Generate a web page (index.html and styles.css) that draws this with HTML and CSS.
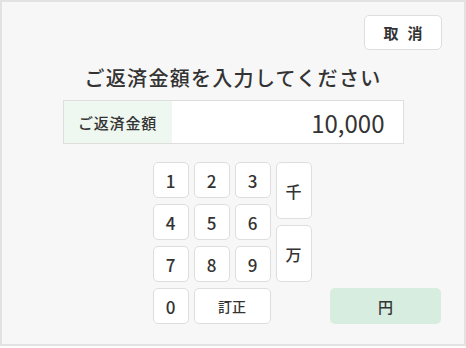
FILE: index.html
```html
<!DOCTYPE html>
<html lang="ja">
<head>
    <meta charset="UTF-8">
    <meta name="viewport" content="width=device-width, initial-scale=1.0">
    <title>ご返済金額入力</title>
    <link rel="stylesheet" href="styles.css">
</head>
<body>

    <div class="screen">
        <!-- Top bar -->
        <div class="top-bar">
            <button class="btn cancel-btn">取消</button>
        </div>

        <h1 class="title">ご返済金額を入力してください</h1>

        <!-- Amount display -->
        <div class="amount-field">
            <div class="amount-label">ご返済金額</div>
            <div class="amount-value">10,000</div>
        </div>

        <!-- Keypad + unit button -->
        <div class="bottom-area">
            <div class="keypad">
                <button class="btn key">1</button>
                <button class="btn key">2</button>
                <button class="btn key">3</button>
                <div class="unit-col">
                    <button class="btn key unit-key">千</button>
                    <button class="btn key unit-key">万</button>
                </div>
                <button class="btn key">4</button>
                <button class="btn key">5</button>
                <button class="btn key">6</button>
                <button class="btn key">7</button>
                <button class="btn key">8</button>
                <button class="btn key">9</button>
                <button class="btn key">0</button>
                <button class="btn key fix-key">訂正</button>
            </div>
            <button class="btn yen-btn">円</button>
        </div>
    </div>

</body>
</html>
```

FILE: styles.css
```css
body {
    margin: 0;
    font-family: "Noto Sans CJK JP", "Noto Sans", sans-serif;
    color: #333;
    background-color: #ffffff;
}

.screen {
    box-sizing: border-box;
    width: 466px;
    height: 346px;
    border: 2px solid #e2e2e2;
    background-color: #f7f7f7;
}

/* --- Buttons (common) --- */
.btn {
    font-family: inherit;
    color: #333;
    background-color: #ffffff;
    border: 1px solid #dedede;
    border-radius: 5px;
    padding: 0;
    box-sizing: border-box;
    cursor: pointer;
}

.top-bar {
    display: flex;
    justify-content: flex-end;
    padding: 13px 22px 0 0;
}
.cancel-btn {
    width: 78px;
    height: 35px;
    font-size: 15px;
    font-weight: 700;
    letter-spacing: 9px;
    padding-left: 9px;
}

.title {
    margin: 14px 0 0;
    text-align: center;
    font-size: 20px;
    line-height: 28px;
    font-weight: 500;
    letter-spacing: 1.3px;
}

/* --- Amount field --- */
.amount-field {
    display: flex;
    width: 341px;
    height: 44px;
    margin: 8px auto 0;
    box-sizing: border-box;
    border: 1px solid #dedede;
    background-color: #ffffff;
}
.amount-label {
    width: 108px;
    display: flex;
    align-items: center;
    justify-content: center;
    background-color: #eef7f0;
    font-size: 15px;
    font-weight: 500;
    letter-spacing: 0.8px;
}
.amount-value {
    flex: 1;
    display: flex;
    align-items: center;
    justify-content: flex-end;
    padding-right: 18px;
    font-size: 24px;
}

/* --- Keypad --- */
.bottom-area {
    display: grid;
    grid-template-columns: 1fr auto 1fr;
    align-items: end;
    margin-top: 18px;
}
.keypad {
    grid-column: 2;
    display: grid;
    grid-template-columns: repeat(4, 36px);
    grid-auto-rows: 36px;
    gap: 6px 5px;
    margin-left: -2px;
}
.key {
    font-size: 17px;
    font-weight: 500;
}
.unit-col {
    grid-column: 4;
    grid-row: 1 / 4;
    display: flex;
    flex-direction: column;
    gap: 6px;
}
.unit-key {
    flex: 1;
    font-size: 16px;
}
.fix-key {
    grid-column: 2 / 4;
    font-size: 14px;
}

.yen-btn {
    grid-column: 3;
    justify-self: end;
    width: 111px;
    height: 36px;
    margin-right: 23px;
    border: none;
    background-color: #d6eddf;
    font-size: 15px;
    font-weight: 500;
}
```
